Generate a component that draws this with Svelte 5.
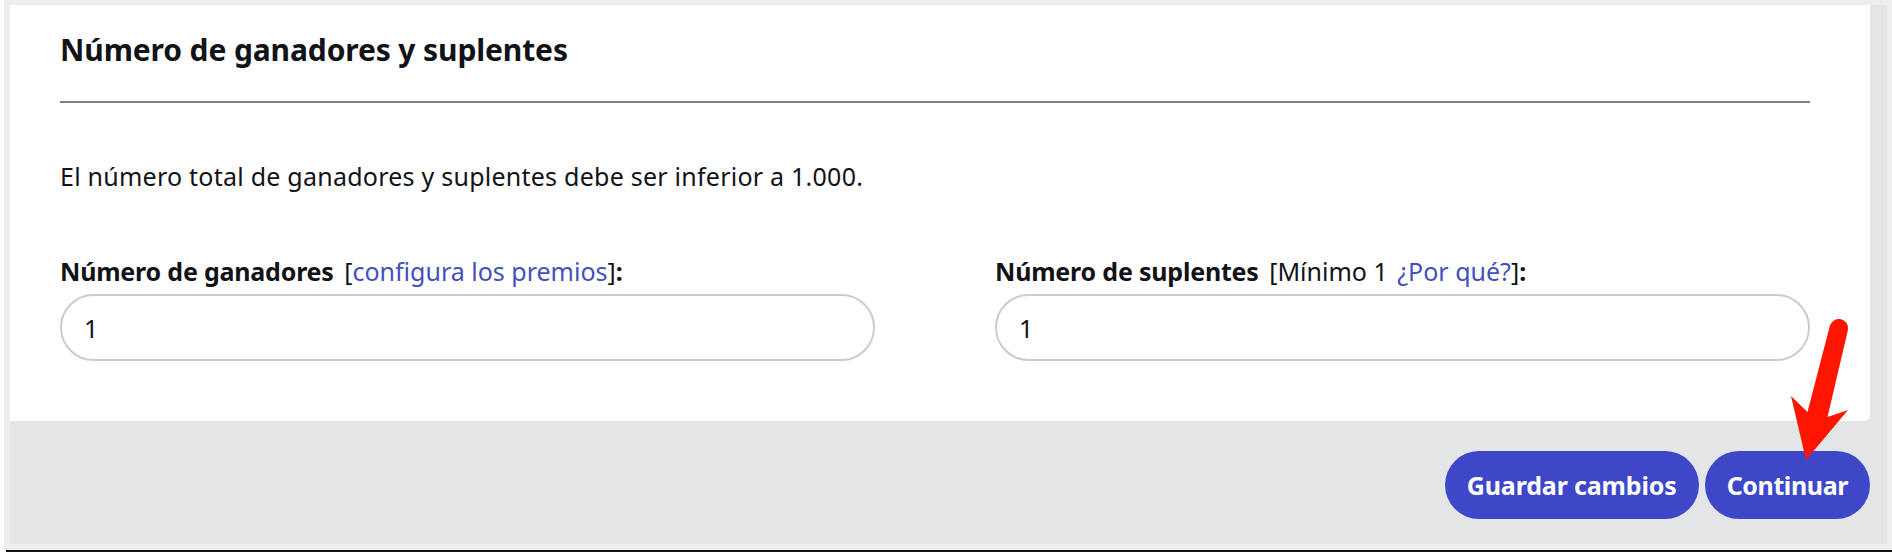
<script>
  let winners = $state('1');
  let substitutes = $state('1');
</script>

<div class="page">
  <div class="frame">
    <div class="panel">
      <section class="card">
        <h2>Número de ganadores y suplentes</h2>
        <p class="hint">El número total de ganadores y suplentes debe ser inferior a 1.000.</p>
        <div class="fields">
          <div class="field">
            <label for="winners"><b>Número de ganadores</b> <span class="extra">[<a href="#premios">configura los premios</a>]</span><b>:</b></label>
            <input id="winners" type="text" bind:value={winners} />
          </div>
          <div class="field">
            <label for="substitutes"><b>Número de suplentes</b> <span class="extra">[Mínimo 1 <a class="why" href="#porque">¿Por qué?</a>]</span><b>:</b></label>
            <input id="substitutes" type="text" bind:value={substitutes} />
          </div>
        </div>
      </section>
      <div class="actions">
        <button type="button">Guardar cambios</button>
        <button type="button" class="next">Continuar</button>
      </div>
    </div>
  </div>

  <svg class="arrow" width="70" height="150" viewBox="1785 315 70 150" aria-hidden="true">
    <path d="M1830 325.3 A9.3 9.3 0 0 1 1848 329.7 L1827.5 417 L1848 410 L1806 460 L1791 396 L1807.5 412 Z" fill="#ff1500" />
  </svg>
</div>

<style>
  :global(body) {
    margin: 0;
    background: #fff;
  }

  .page {
    position: relative;
    height: 552px;
    padding-left: 4px;
    box-sizing: border-box;
    overflow: hidden;
    font-family: "Noto Sans", "Open Sans", sans-serif;
    color: #111318;
  }

  .frame {
    height: 550px;
    box-sizing: border-box;
    padding: 5px 5px 6px 6px;
    background: #eeeeee;
    box-shadow: 2px 2px 0 #111;
  }

  .panel {
    height: 100%;
    background: #e4e5e7;
  }

  .card {
    margin-right: 17px;
    padding: 0 60px 60px 50px;
    background: #fff;
    border-bottom-right-radius: 6px;
  }

  h2 {
    margin: 0;
    padding: 25px 0 31px;
    font-size: 30px;
    line-height: 40px;
    font-weight: 700;
    letter-spacing: -0.12px;
    border-bottom: 2px solid #808080;
  }

  .hint {
    margin: 58px 0 0;
    font-size: 25px;
    line-height: 30px;
    letter-spacing: 0.24px;
  }

  .fields {
    display: grid;
    grid-template-columns: 815px 815px;
    gap: 120px;
    margin-top: 67px;
  }

  label {
    display: block;
    font-size: 25px;
    line-height: 26px;
    white-space: pre-wrap;
  }

  label b {
    letter-spacing: -0.2px;
  }

  .extra {
    margin-left: 4px;
  }

  a {
    color: #4350bd;
    text-decoration: none;
  }

  .why {
    margin-left: 3px;
  }

  input {
    display: block;
    width: 100%;
    height: 67px;
    margin-top: 10px;
    padding: 0 22px;
    box-sizing: border-box;
    border: 2px solid #cccccc;
    border-radius: 34px;
    background: #fff;
    font: inherit;
    font-size: 25px;
    color: #111318;
    outline: none;
  }

  .actions {
    display: flex;
    justify-content: flex-end;
    gap: 6px;
    margin-right: 17px;
    padding-top: 30px;
  }

  button {
    height: 68px;
    padding: 0 22px;
    border: 0;
    border-radius: 34px;
    background: #3d47c8;
    color: #fff;
    font: inherit;
    font-size: 25px;
    font-weight: 700;
    letter-spacing: -0.15px;
  }

  .next {
    letter-spacing: -0.4px;
  }

  .arrow {
    position: absolute;
    left: 1785px;
    top: 315px;
  }
</style>
